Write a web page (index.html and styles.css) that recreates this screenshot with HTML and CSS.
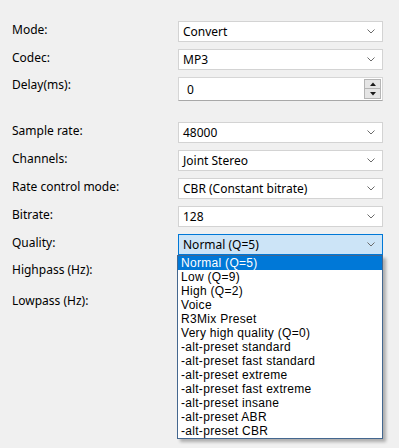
FILE: index.html
```html
<!DOCTYPE html>
<html lang="en">
<head>
    <meta charset="UTF-8">
    <title>Codec settings</title>
    <link rel="stylesheet" href="styles.css">
</head>
<body>

<div class="form">
    <div class="label">Mode:</div>
    <div class="combo"><span>Convert</span><svg class="chevron" width="8" height="5" viewBox="0 0 8 5"><polyline points="0.5,0.5 4,4 7.5,0.5"/></svg></div>

    <div class="label">Codec:</div>
    <div class="combo"><span>MP3</span><svg class="chevron" width="8" height="5" viewBox="0 0 8 5"><polyline points="0.5,0.5 4,4 7.5,0.5"/></svg></div>

    <div class="label label-spin">Delay(ms):</div>
    <div class="spin">
        <span>0</span>
        <div class="spin-buttons">
            <div class="spin-btn"><svg width="6" height="4" viewBox="0 0 6 4"><polygon points="0,4 3,0.5 6,4"/></svg></div>
            <div class="spin-btn"><svg width="6" height="4" viewBox="0 0 6 4"><polygon points="0,0 3,3.5 6,0"/></svg></div>
        </div>
    </div>

    <div class="spacer"></div>

    <div class="label">Sample rate:</div>
    <div class="combo"><span>48000</span><svg class="chevron" width="8" height="5" viewBox="0 0 8 5"><polyline points="0.5,0.5 4,4 7.5,0.5"/></svg></div>

    <div class="label">Channels:</div>
    <div class="combo"><span>Joint Stereo</span><svg class="chevron" width="8" height="5" viewBox="0 0 8 5"><polyline points="0.5,0.5 4,4 7.5,0.5"/></svg></div>

    <div class="label">Rate control mode:</div>
    <div class="combo"><span>CBR (Constant bitrate)</span><svg class="chevron" width="8" height="5" viewBox="0 0 8 5"><polyline points="0.5,0.5 4,4 7.5,0.5"/></svg></div>

    <div class="label">Bitrate:</div>
    <div class="combo"><span>128</span><svg class="chevron" width="8" height="5" viewBox="0 0 8 5"><polyline points="0.5,0.5 4,4 7.5,0.5"/></svg></div>

    <div class="label">Quality:</div>
    <div class="combo-wrap">
        <div class="combo combo-open"><span>Normal (Q=5)</span><svg class="chevron" width="8" height="5" viewBox="0 0 8 5"><polyline points="0.5,0.5 4,4 7.5,0.5"/></svg></div>
        <ul class="popup">
            <li class="selected">Normal (Q=5)</li>
            <li>Low (Q=9)</li>
            <li>High (Q=2)</li>
            <li>Voice</li>
            <li>R3Mix Preset</li>
            <li>Very high quality (Q=0)</li>
            <li>-alt-preset standard</li>
            <li>-alt-preset fast standard</li>
            <li>-alt-preset extreme</li>
            <li>-alt-preset fast extreme</li>
            <li>-alt-preset insane</li>
            <li>-alt-preset ABR</li>
            <li>-alt-preset CBR</li>
        </ul>
    </div>

    <div class="label label-spin">Highpass (Hz):</div>
    <div class="spin"></div>

    <div class="label label-spin">Lowpass (Hz):</div>
    <div class="spin"></div>
</div>

</body>
</html>
```

FILE: styles.css
```css
html, body {
    margin: 0;
    padding: 0;
    background-color: #f0f0f0;
    font-family: "Noto Sans", "Open Sans", sans-serif;
    font-size: 12px;
    color: #000;
}

body {
    min-height: 100vh;
}

.form {
    display: grid;
    grid-template-columns: 166px 205px;
    row-gap: 7px;
    padding: 21px 0 0 12px;
}

.label {
    align-self: start;
    line-height: 16px;
    padding-top: 1px;
    white-space: nowrap;
}

.label-spin {
    padding-top: 0;
}

.spacer {
    grid-column: 1 / 3;
    height: 7px;
}

.combo {
    box-sizing: border-box;
    height: 21px;
    display: flex;
    align-items: center;
    justify-content: space-between;
    padding: 0 7px 0 4px;
    background-color: #fff;
    border: 1px solid #d3d3d3;
    white-space: nowrap;
}

.chevron polyline {
    fill: none;
    stroke: #6b6b6b;
    stroke-width: 1;
}

.combo-open {
    background-color: #cce4f7;
    border-color: #0078d7;
}

.combo-wrap {
    position: relative;
}

.popup {
    position: absolute;
    top: 21px;
    left: -1px;
    width: 206px;
    box-sizing: border-box;
    margin: 0;
    padding: 0;
    list-style: none;
    background-color: #fff;
    border: 1px solid #44678f;
    box-shadow: 3px 3px 3px rgba(0, 0, 0, 0.28);
    z-index: 10;
}

.popup li {
    height: 14px;
    line-height: 14px;
    padding-left: 3px;
    font-family: "Liberation Sans", Arial, sans-serif;
    font-size: 12px;
    letter-spacing: 0.3px;
    white-space: nowrap;
}

.popup li.selected {
    background-color: #0078d7;
    color: #fff;
}

.spin {
    box-sizing: border-box;
    height: 24px;
    display: flex;
    align-items: center;
    justify-content: space-between;
    padding: 0 1px 0 8px;
    background-color: #fff;
    border: 1px solid #d6d6d6;
    border-bottom-color: #a8a8a8;
}

.spin-buttons {
    display: flex;
    flex-direction: column;
}

.spin-btn {
    width: 17px;
    height: 10px;
    box-sizing: border-box;
    display: flex;
    align-items: center;
    justify-content: center;
    background-color: #e5e5e5;
    border: 1px solid #b5b5b5;
}

.spin-btn + .spin-btn {
    border-top: none;
}

.spin-btn polygon {
    fill: #1a1a1a;
}
```
